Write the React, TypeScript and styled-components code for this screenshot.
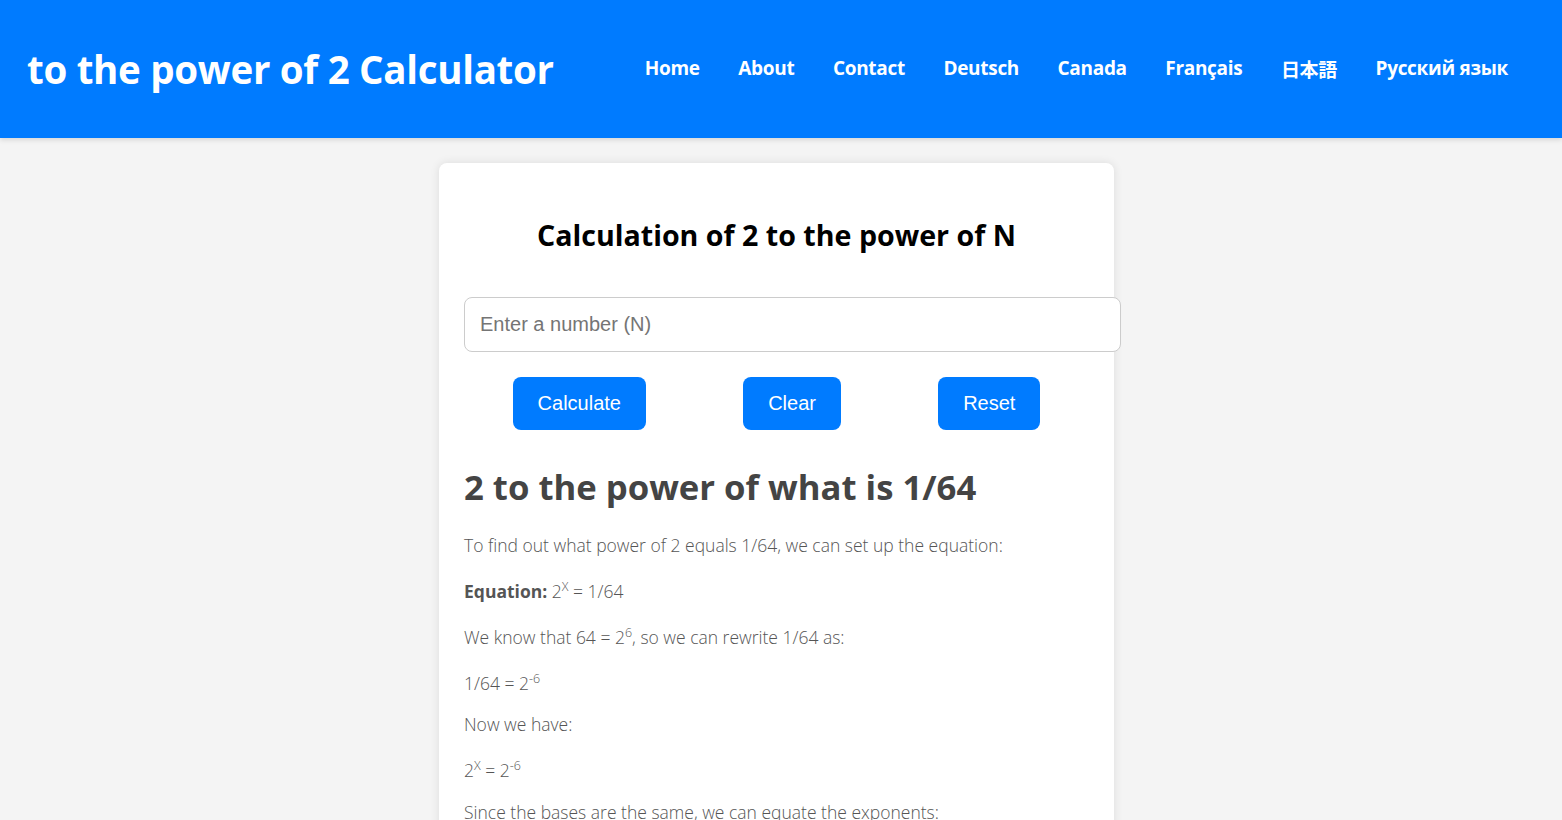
import React from 'react';
import styled, { createGlobalStyle } from 'styled-components';

const GlobalStyle = createGlobalStyle`
  html, body {
    margin: 0;
    padding: 0;
    background: #f4f4f4;
    font-family: "Open Sans", "Noto Sans CJK JP", sans-serif;
    overflow: hidden;
  }
`;

const Header = styled.header`
  height: 138px;
  background: #007bff;
  color: #fff;
  display: flex;
  align-items: center;
  justify-content: space-between;
  padding: 0 54px 0 27px;
  box-shadow: 0 2px 5px rgba(0, 0, 0, 0.12);
`;

const SiteTitle = styled.h1`
  margin: 0;
  font-size: 38.5px;
  font-weight: 700;
  letter-spacing: -0.3px;
`;

const Nav = styled.nav`
  display: flex;
  gap: 38.5px;
`;

const NavLink = styled.a`
  color: #fff;
  text-decoration: none;
  font-size: 19px;
  font-weight: 700;
  letter-spacing: -0.3px;
`;

const Main = styled.main`
  padding: 25px 9px 0 0;
`;

const Card = styled.section`
  width: 625px;
  margin: 0 auto;
  background: #fff;
  border-radius: 8px;
  padding: 25px;
  box-shadow: 0 0 10px rgba(0, 0, 0, 0.1);
  min-height: 700px;
`;

const CardTitle = styled.h2`
  margin: 27px 0 43px;
  text-align: center;
  font-size: 28.6px;
  font-weight: 700;
  color: #000;
`;

const NumberInput = styled.input`
  display: block;
  width: 100%;
  padding: 15px;
  font-size: 20px;
  font-family: "Liberation Sans", Arial, sans-serif;
  border: 1px solid #ccc;
  border-radius: 8px;
  margin: 0;
  &::placeholder {
    color: #757575;
  }
`;

const ButtonRow = styled.div`
  display: flex;
  justify-content: space-around;
  margin-top: 25px;
`;

const Button = styled.button`
  background: #007bff;
  color: #fff;
  border: none;
  border-radius: 8px;
  padding: 15px 25px;
  font-size: 20px;
  line-height: 23px;
  font-family: "Liberation Sans", Arial, sans-serif;
  cursor: pointer;
`;

const ResultTitle = styled.h2`
  margin: 33px 0 22px;
  font-size: 34.7px;
  font-weight: 700;
  color: #444;
`;

const Para = styled.p`
  margin: 16px 0;
  font-size: 17.5px;
  line-height: 26px;
  color: #555;
  font-weight: 300;
  strong {
    font-weight: 700;
  }
  sup {
    font-size: 12.5px;
  }
`;

export default function App() {
  const links = ["Home", "About", "Contact", "Deutsch", "Canada", "Français", "日本語", "Русский язык"];
  return (
    <>
      <GlobalStyle />
      <Header>
        <SiteTitle>to the power of 2 Calculator</SiteTitle>
        <Nav>
          {links.map((l) => (
            <NavLink key={l} href="#">{l}</NavLink>
          ))}
        </Nav>
      </Header>
      <Main>
        <Card>
          <CardTitle>Calculation of 2 to the power of N</CardTitle>
          <NumberInput type="number" placeholder="Enter a number (N)" />
          <ButtonRow>
            <Button>Calculate</Button>
            <Button>Clear</Button>
            <Button>Reset</Button>
          </ButtonRow>
          <ResultTitle>2 to the power of what is 1/64</ResultTitle>
          <Para>To find out what power of 2 equals 1/64, we can set up the equation:</Para>
          <Para><strong>Equation:</strong> 2<sup>X</sup> = 1/64</Para>
          <Para>We know that 64 = 2<sup>6</sup>, so we can rewrite 1/64 as:</Para>
          <Para>1/64 = 2<sup>-6</sup></Para>
          <Para>Now we have:</Para>
          <Para>2<sup>X</sup> = 2<sup>-6</sup></Para>
          <Para>Since the bases are the same, we can equate the exponents:</Para>
        </Card>
      </Main>
    </>
  );
}
